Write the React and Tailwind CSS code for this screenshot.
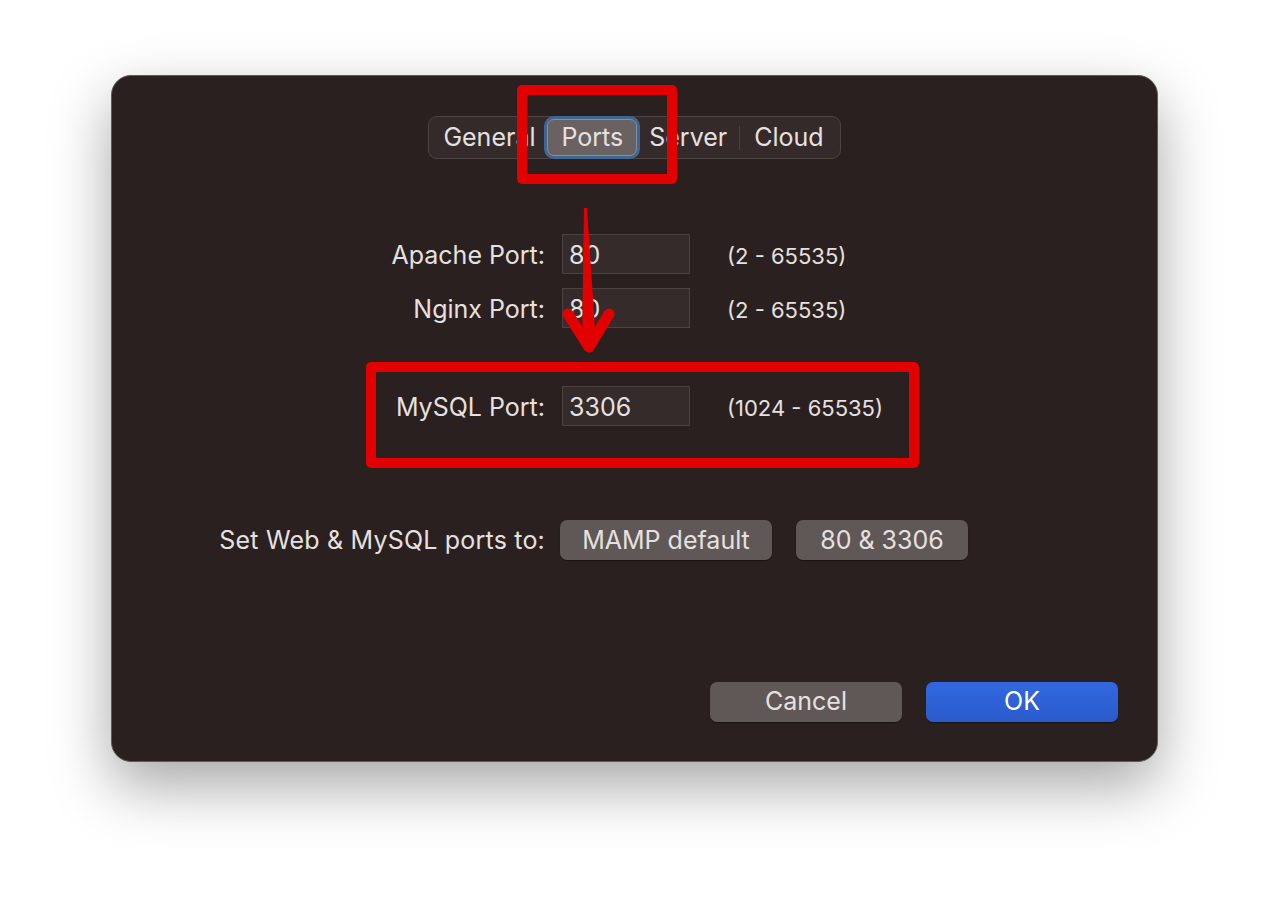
export default function App() {
  const rows = [
    { label: "Apache Port:", value: "80", range: "(2 - 65535)", mt: "mt-[75px]" },
    { label: "Nginx Port:", value: "80", range: "(2 - 65535)", mt: "mt-[14px]" },
    { label: "MySQL Port:", value: "3306", range: "(1024 - 65535)", mt: "mt-[58px]" },
  ];

  return (
    <div
      className="w-[1270px] h-[910px] bg-white pt-[75px] pl-[111px]"
      style={{ fontFamily: "Inter, 'Noto Sans', sans-serif" }}
    >
      {/* Window */}
      <div className="relative w-[1047px] h-[687px] rounded-[20px] bg-[#2a201f] border border-[#615957] shadow-[0_24px_60px_rgba(0,0,0,0.35)] flex flex-col text-[#e6e1e0]">
        {/* Tabs */}
        <div className="mt-[40px] self-center flex items-center h-[43px] rounded-[9px] bg-[#332a29] border border-[#4c4442] px-[2px] text-[25px] leading-none">
          <span className="px-[12px]">General</span>
          <span className="px-[13px] h-[37px] flex items-center rounded-[7px] bg-[#6a6260] ring-[3px] ring-[#3f6793] border border-[#7f90a6]">
            Ports
          </span>
          <span className="px-[12px]">Server</span>
          <span className="w-px h-[24px] bg-[#4c4442]" />
          <span className="px-[14px]">Cloud</span>
        </div>

        {/* Port rows */}
        {rows.map((r) => (
          <div key={r.label} className={`flex items-center h-[40px] leading-none ${r.mt}`}>
            <span className="w-[433px] text-right text-[25px] pt-[3px]">{r.label}</span>
            <div className="ml-[17px] w-[128px] h-[40px] bg-[#342b2a] border border-[#4b4341] flex items-center px-[6px] pt-[2px] text-[25px]">
              {r.value}
            </div>
            <span className="ml-[37px] text-[22px] pt-[3px]">{r.range}</span>
          </div>
        ))}

        {/* Presets */}
        <div className="flex items-center h-[40px] mt-[94px] leading-none">
          <span className="w-[433px] text-right text-[25px] tracking-[0.2px]">Set Web &amp; MySQL ports to:</span>
          <button className="ml-[15px] w-[212px] h-[40px] rounded-[7px] bg-[#5f5856] text-[25px] shadow-[0_1px_1px_rgba(0,0,0,0.4)]">
            MAMP default
          </button>
          <button className="ml-[24px] w-[172px] h-[40px] rounded-[7px] bg-[#5f5856] text-[25px] shadow-[0_1px_1px_rgba(0,0,0,0.4)]">
            80 &amp; 3306
          </button>
        </div>

        {/* Footer */}
        <div className="mt-auto mb-[39px] mr-[39px] flex justify-end gap-[24px]">
          <button className="w-[192px] h-[40px] rounded-[7px] bg-[#5f5856] text-[25px] shadow-[0_1px_1px_rgba(0,0,0,0.4)]">
            Cancel
          </button>
          <button className="w-[192px] h-[40px] rounded-[7px] bg-gradient-to-b from-[#3268e0] to-[#2a5bcc] text-white text-[25px] shadow-[0_1px_1px_rgba(0,0,0,0.4)]">
            OK
          </button>
        </div>

        {/* Annotations */}
        <div className="absolute left-[405px] top-[9px] w-[160px] h-[99px] border-[10px] border-[#e30000] rounded-[5px] pointer-events-none" />
        <div className="absolute left-[254px] top-[286px] w-[553px] h-[106px] border-[10px] border-[#e30000] rounded-[5px] pointer-events-none" />
        <svg className="absolute left-0 top-0 pointer-events-none" width="1047" height="687">
          <polygon points="472,132 475,132 484,268 470,268" fill="#e30000" />
          <path
            d="M456 238 L477 271 L497 238"
            fill="none"
            stroke="#e30000"
            strokeWidth="11"
            strokeLinecap="round"
            strokeLinejoin="round"
          />
          <polygon points="460,240 477,268 494,240 477,258" fill="#e30000" />
        </svg>
      </div>
    </div>
  );
}
